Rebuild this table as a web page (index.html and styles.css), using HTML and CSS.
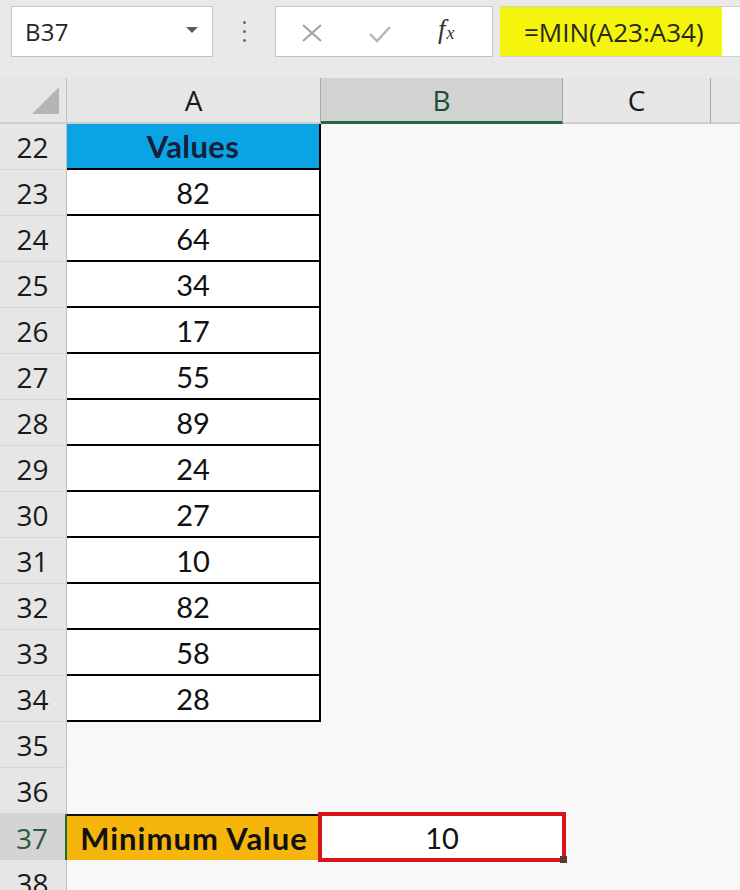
FILE: index.html
```html
<!DOCTYPE html>
<html>
<head>
<meta charset="utf-8">
<link rel="stylesheet" href="styles.css">
</head>
<body>
<div class="app">
  <div class="toolbar">
    <div class="namebox">
      <span class="name">B37</span>
      <svg class="caret" width="14" height="8" viewBox="0 0 14 8"><path d="M1 1 L13 1 L7 7 Z" fill="#5a5a5a"/></svg>
    </div>
    <div class="dots"><i></i><i></i><i></i></div>
    <div class="fbuttons">
      <svg class="ico-x" width="24" height="20" viewBox="0 0 24 20"><path d="M3 2 L21 18 M21 2 L3 18" stroke="#a0a0a0" stroke-width="2" fill="none"/></svg>
      <svg class="ico-check" width="24" height="18" viewBox="0 0 24 18"><path d="M2 9 L9 16 L22 2" stroke="#b4b4b4" stroke-width="2.4" fill="none"/></svg>
      <span class="fx">f<sub>x</sub></span>
    </div>
    <div class="formula">
      <div class="fhl">=MIN(A23:A34)</div>
    </div>
  </div>

  <div class="sheet">
    <div class="row head">
      <div class="corner"><svg width="30" height="30" viewBox="0 0 30 30"><path d="M29 1 L29 28 L2 28 Z" fill="#b5b5b5"/></svg></div>
      <div class="ch">A</div>
      <div class="ch sel">B</div>
      <div class="ch">C</div>
      <div class="ch last"></div>
    </div>

    <div class="row"><div class="rh">22</div><div class="a hdr">Values</div><div class="b"></div><div class="c"></div><div class="d"></div></div>
    <div class="row"><div class="rh">23</div><div class="a t">82</div><div class="b"></div><div class="c"></div><div class="d"></div></div>
    <div class="row"><div class="rh">24</div><div class="a t">64</div><div class="b"></div><div class="c"></div><div class="d"></div></div>
    <div class="row"><div class="rh">25</div><div class="a t">34</div><div class="b"></div><div class="c"></div><div class="d"></div></div>
    <div class="row"><div class="rh">26</div><div class="a t">17</div><div class="b"></div><div class="c"></div><div class="d"></div></div>
    <div class="row"><div class="rh">27</div><div class="a t">55</div><div class="b"></div><div class="c"></div><div class="d"></div></div>
    <div class="row"><div class="rh">28</div><div class="a t">89</div><div class="b"></div><div class="c"></div><div class="d"></div></div>
    <div class="row"><div class="rh">29</div><div class="a t">24</div><div class="b"></div><div class="c"></div><div class="d"></div></div>
    <div class="row"><div class="rh">30</div><div class="a t">27</div><div class="b"></div><div class="c"></div><div class="d"></div></div>
    <div class="row"><div class="rh">31</div><div class="a t">10</div><div class="b"></div><div class="c"></div><div class="d"></div></div>
    <div class="row"><div class="rh">32</div><div class="a t">82</div><div class="b"></div><div class="c"></div><div class="d"></div></div>
    <div class="row"><div class="rh">33</div><div class="a t">58</div><div class="b"></div><div class="c"></div><div class="d"></div></div>
    <div class="row"><div class="rh">34</div><div class="a t">28</div><div class="b"></div><div class="c"></div><div class="d"></div></div>
    <div class="row"><div class="rh">35</div><div class="a"></div><div class="b"></div><div class="c"></div><div class="d"></div></div>
    <div class="row"><div class="rh">36</div><div class="a"></div><div class="b"></div><div class="c"></div><div class="d"></div></div>
    <div class="row"><div class="rh selrow">37</div><div class="a gold">Minimum Value</div><div class="b result"><span>10</span><i class="handle"></i></div><div class="c"></div><div class="d"></div></div>
    <div class="row"><div class="rh">38</div><div class="a"></div><div class="b"></div><div class="c"></div><div class="d"></div></div>
  </div>
</div>
</body>
</html>
```

FILE: styles.css
```css
* { box-sizing: border-box; }
html, body { margin: 0; padding: 0; }
body {
  width: 740px;
  height: 890px;
  overflow: hidden;
  background: #f8f8f8;
  font-family: "Open Sans", "DejaVu Sans", sans-serif;
  color: #1e1e1e;
}
.app { width: 740px; }

.toolbar {
  height: 78px;
  background: #e9e9e9;
  display: flex;
  align-items: flex-start;
  padding-top: 6px;
}
.namebox {
  margin-left: 11px;
  width: 202px;
  height: 51px;
  background: #fff;
  border: 1px solid #c4c4c4;
  display: flex;
  align-items: center;
  justify-content: space-between;
  padding: 0 13px 0 13px;
}
.name { font-size: 24px; color: #262626; letter-spacing: 0.3px; }
.caret { margin-top: -4px; }
.dots {
  width: 62px;
  height: 51px;
  display: flex;
  flex-direction: column;
  align-items: center;
  justify-content: center;
  gap: 6px;
}
.dots i { display: block; width: 3px; height: 3px; background: #6a6a6a; border-radius: 50%; }
.fbuttons {
  width: 218px;
  height: 51px;
  background: #fff;
  border: 1px solid #c4c4c4;
  display: flex;
  align-items: center;
  padding-left: 24px;
}
.ico-x { margin-top: 2px; }
.ico-check { margin-left: 44px; margin-top: 4px; }
.fx {
  margin-left: 46px;
  font-family: "Liberation Serif", "DejaVu Serif", serif;
  font-style: italic;
  font-size: 27px;
  color: #333;
  margin-top: -4px;
  white-space: nowrap;
}
.fx sub { font-size: 18px; vertical-align: -1px; margin-left: 1px; }
.formula {
  margin-left: 7px;
  flex: 1;
  height: 51px;
  background: #fff;
  border-top: 1px solid #d0d0d0;
  border-bottom: 1px solid #d0d0d0;
}
.fhl {
  width: 222px;
  height: 100%;
  background: #f4f40c;
  font-size: 26px;
  color: #2a2a1a;
  display: flex;
  align-items: center;
  padding-left: 24px;
  white-space: nowrap;
}

.sheet { display: flex; flex-direction: column; }
.row {
  display: grid;
  grid-template-columns: 67px 254px 242px 148px 1fr;
  height: 46px;
  flex: none;
}
.row.head { height: 46px; }
.corner {
  background: #e6e6e6;
  border-right: 1px solid #bdbdbd;
  border-bottom: 2px solid #cfcfcf;
  display: flex;
  align-items: flex-end;
  justify-content: flex-end;
  padding: 0 6px 6px 0;
}
.ch {
  background: #e6e6e6;
  border-right: 1px solid #a9a9a9;
  border-bottom: 2px solid #cfcfcf;
  display: flex;
  align-items: center;
  justify-content: center;
  font-size: 28px;
  color: #1a1a1a;
}
.ch.sel { background: #d2d2d2; border-bottom: 3px solid #1f6b3f; color: #1c4f32; }
.ch.last { border-right: none; }

.rh {
  background: #e6e6e6;
  border-right: 1px solid #bdbdbd;
  border-bottom: 1px solid #d6d6d6;
  display: flex;
  align-items: center;
  justify-content: center;
  font-size: 28px;
  color: #1a1a1a;
  padding-right: 1px;
}
.rh.selrow { background: #d4d4d4; border-right: 2px solid #1f6b3f; color: #2b5a40; }

.a, .b, .c, .d { background: #f8f8f8; }
.a {
  font-family: "Lato", "Liberation Sans", sans-serif;
  font-size: 29px;
  display: flex;
  align-items: center;
  justify-content: center;
  color: #111;
}
.a.hdr {
  background: #0aa3e4;
  font-weight: bold;
  font-size: 31px;
  color: #14203a;
  border-right: 2px solid #000;
  border-bottom: 2px solid #000;
  letter-spacing: 0.4px;
}
.a.t {
  background: #fff;
  border-right: 2px solid #000;
  border-bottom: 2px solid #000;
}
.a.gold {
  background: #f5b50a;
  font-weight: bold;
  font-size: 31px;
  letter-spacing: 1px;
  color: #111;
  border-top: 2px solid #111;
  border-bottom: 2px solid #111;
  white-space: nowrap;
}
.b.result {
  position: relative;
  background: #fff;
  border: 4px solid #d9141b;
  margin: -2px -3px 0 -3px;
  height: 50px;
  display: flex;
  align-items: center;
  justify-content: center;
  font-family: "Lato", "Liberation Sans", sans-serif;
  font-size: 29px;
  color: #111;
}
.handle {
  position: absolute;
  right: -5px;
  bottom: -5px;
  width: 7px;
  height: 7px;
  background: #5a3a2a;
}
```
